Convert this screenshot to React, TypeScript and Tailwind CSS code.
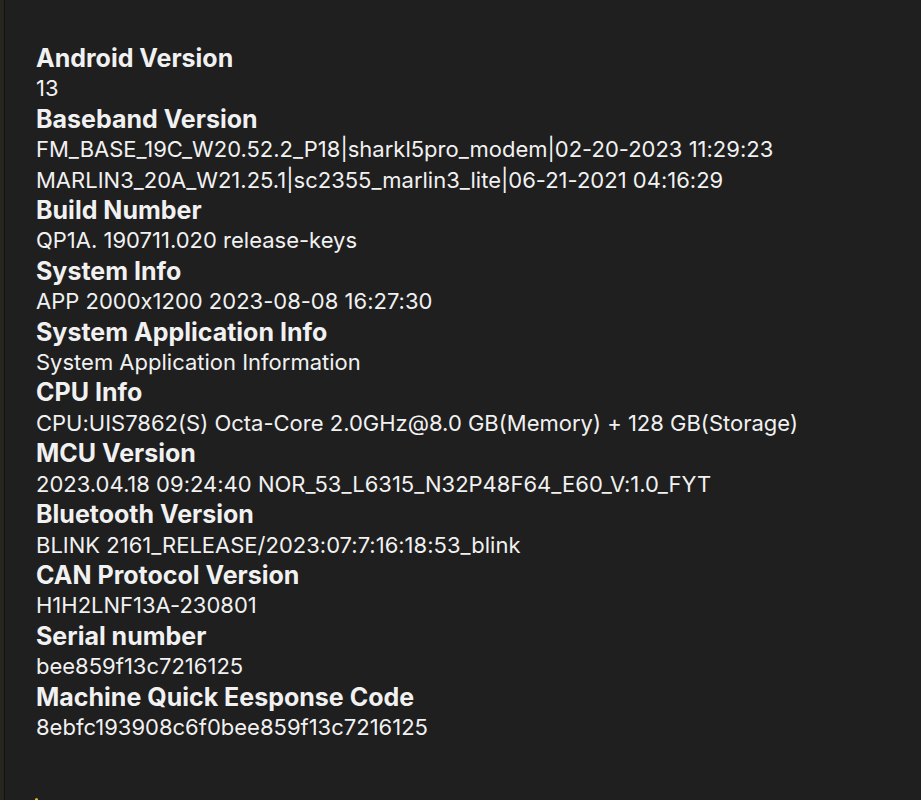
const rows: { title: string; values: string[] }[] = [
  { title: 'Android Version', values: ['13'] },
  {
    title: 'Baseband Version',
    values: [
      'FM_BASE_19C_W20.52.2_P18|sharkl5pro_modem|02-20-2023 11:29:23',
      'MARLIN3_20A_W21.25.1|sc2355_marlin3_lite|06-21-2021 04:16:29',
    ],
  },
  { title: 'Build Number', values: ['QP1A. 190711.020 release-keys'] },
  { title: 'System Info', values: ['APP 2000x1200 2023-08-08 16:27:30'] },
  { title: 'System Application Info', values: ['System Application Information'] },
  { title: 'CPU Info', values: ['CPU:UIS7862(S) Octa-Core 2.0GHz@8.0 GB(Memory) + 128 GB(Storage)'] },
  { title: 'MCU Version', values: ['2023.04.18 09:24:40 NOR_53_L6315_N32P48F64_E60_V:1.0_FYT'] },
  { title: 'Bluetooth Version', values: ['BLINK 2161_RELEASE/2023:07:7:16:18:53_blink'] },
  { title: 'CAN Protocol Version', values: ['H1H2LNF13A-230801'] },
  { title: 'Serial number', values: ['bee859f13c7216125'] },
  { title: 'Machine Quick Eesponse Code', values: ['8ebfc193908c6f0bee859f13c7216125'] },
];

export default function App() {
  return (
    <div
      className="flex h-[800px] w-[921px] overflow-hidden bg-[#1f1f1f] text-[#f1f1f1] [font-variant-ligatures:no-contextual]"
      style={{ fontFamily: 'Inter, "Noto Sans", sans-serif' }}
    >
      {/* left edge strip */}
      <div className="w-[4px] shrink-0 bg-[#26261f]" />
      <div className="w-[1px] shrink-0 bg-[#121212]" />

      <div className="relative flex-1 pl-[31px] pt-[43px]">
        {rows.map((row) => (
          <div key={row.title}>
            <h2 className="whitespace-nowrap text-[25px] font-bold leading-[30.4px]">{row.title}</h2>
            {row.values.map((v) => (
              <p key={v} className="whitespace-nowrap text-[22px] leading-[30.4px]">
                {v}
              </p>
            ))}
          </div>
        ))}
        <span className="absolute bottom-[-2px] left-[30px] h-[4px] w-[3px] rounded-t-full bg-[#e2b53a]" />
      </div>
    </div>
  );
}
